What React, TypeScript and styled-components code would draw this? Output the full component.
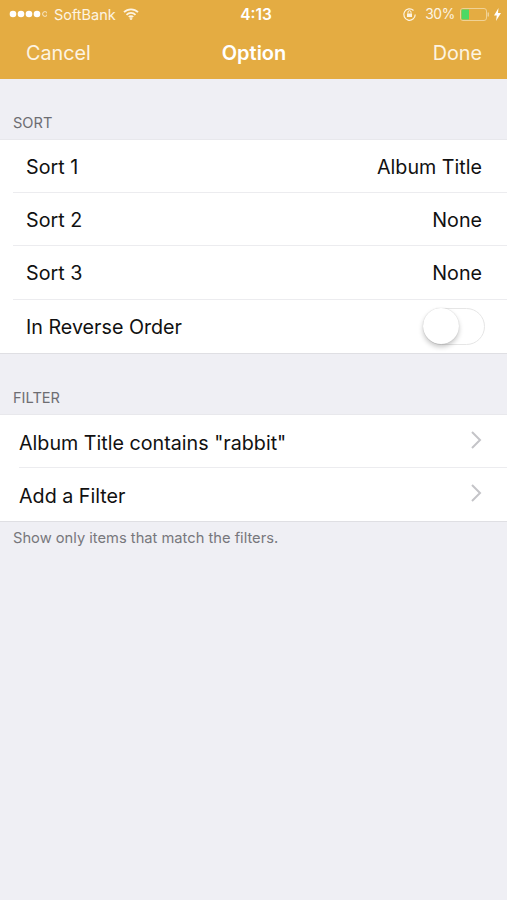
import React from "react";
import styled, { createGlobalStyle } from "styled-components";

const Global = createGlobalStyle`
  html, body { margin: 0; padding: 0; background: #efeff4; }
  body { font-family: Inter, "Liberation Sans", sans-serif; }
  * { box-sizing: border-box; }
`;

const Page = styled.div`
  width: 507px;
  height: 900px;
  overflow: hidden;
  background: #efeff4;
`;

const Header = styled.header`
  height: 79px;
  background: #e4ac42;
  color: #fdf4e2;
`;

const StatusBar = styled.div`
  height: 28px;
  padding: 0 9px;
  display: grid;
  grid-template-columns: 1fr auto 1fr;
  align-items: center;
  font-size: 14.5px;
`;

const StatusLeft = styled.div`
  display: flex;
  align-items: center;
  gap: 7px;
`;

const StatusRight = styled.div`
  display: flex;
  align-items: center;
  justify-content: flex-end;
  gap: 4px;
  margin-right: -3px;
`;

const Time = styled.div`
  margin-left: 5px;
  font-size: 15.5px;
  font-weight: 600;
  color: #fff;
`;

const Percent = styled.span`
  margin: 0 1px 0 4px;
  font-size: 13.8px;
  letter-spacing: -0.3px;
`;

const NavBar = styled.div`
  height: 51px;
  padding: 0 25px 2px 26px;
  display: grid;
  grid-template-columns: 1fr auto 1fr;
  align-items: center;
  font-size: 19.8px;
`;

const NavDone = styled.span`
  text-align: right;
`;

const NavTitle = styled.div`
  font-size: 20px;
  font-weight: 600;
  color: #fff;
`;

const SectionLabel = styled.div`
  height: 60px;
  padding: 0 13px 7px;
  display: flex;
  align-items: flex-end;
  font-size: 14.6px;
  color: #6d6d72;
`;

const Group = styled.section`
  background: #fff;
  border-top: 1px solid #e8e8ec;
  border-bottom: 1px solid #dfdfe3;
`;

const Row = styled.div<{ $flush?: boolean }>`
  height: ${(p) => (p.$flush ? 53 : 53.2)}px;
  margin-left: ${(p) => (p.$flush ? 19 : 13)}px;
  padding-left: ${(p) => (p.$flush ? 0 : 13)}px;
  padding-right: 25px;
  padding-top: ${(p) => (p.$flush ? 4 : 1)}px;
  display: flex;
  align-items: center;
  justify-content: space-between;
  font-size: 19.7px;
  color: #111;
  &:not(:last-child) {
    border-bottom: 1px solid #ececef;
  }
`;

const Toggle = styled.div`
  position: relative;
  width: 62px;
  height: 37px;
  margin-right: -3px;
  margin-bottom: 1px;
  border: 1.5px solid #e6e6e6;
  border-radius: 19px;
  background: #fff;
`;

const Knob = styled.div`
  position: absolute;
  left: -1px;
  top: -1px;
  width: 36px;
  height: 36px;
  border-radius: 50%;
  background: #fff;
  box-shadow: 0 3px 5px rgba(0, 0, 0, 0.22), 0 0 1px rgba(0, 0, 0, 0.2);
`;

const Footnote = styled.div`
  padding: 7px 13px;
  font-size: 14.7px;
  color: #77777c;
`;

const ChevronIcon = styled.svg`
  margin-bottom: 6px;
`;

const Chevron = () => (
  <ChevronIcon width="12" height="20" viewBox="0 0 12 20" fill="none">
    <path d="M2 2l8 8-8 8" stroke="#c4c4c8" strokeWidth="2" />
  </ChevronIcon>
);

const Wifi = () => (
  <svg width="16" height="12" viewBox="0 0 16 12" fill="none" stroke="#fdf4e2" strokeWidth="1.8">
    <path d="M1 4.2a10 10 0 0 1 14 0M3.5 6.8a6.4 6.4 0 0 1 9 0M5.8 9a3 3 0 0 1 4.4 0" />
    <circle cx="8" cy="10.6" r=".5" />
  </svg>
);

const Signal = () => (
  <svg width="38" height="8" viewBox="0 0 38 8">
    {[4, 12, 20, 28].map((x) => (
      <circle key={x} cx={x} cy="4" r="3.3" fill="#fff" />
    ))}
    <circle cx="36" cy="4" r="2.4" fill="none" stroke="#fff" strokeWidth=".7" />
  </svg>
);

const RotationLock = () => (
  <svg width="15" height="15" viewBox="0 0 15 15" fill="none" stroke="#fdf4e2" strokeWidth="1.2">
    <path d="M13.2 7.5a5.7 5.7 0 1 1-1.7-4" />
    <rect x="5" y="6.5" width="5" height="3.5" fill="#fdf4e2" stroke="none" />
    <path d="M6 6.5V5.2a1.5 1.5 0 0 1 3 0V6.5" strokeWidth="1" />
  </svg>
);

const Battery = () => (
  <svg width="30" height="13" viewBox="0 0 30 13" fill="none">
    <rect x=".5" y=".5" width="26" height="12" rx="2.5" stroke="#f0d295" />
    <rect x="1.5" y="1.5" width="7.5" height="10" fill="#4cd964" />
    <rect x="27.5" y="4.5" width="1.5" height="4" fill="#f0d295" />
  </svg>
);

const Bolt = () => (
  <svg width="7" height="13" viewBox="0 0 7 13">
    <path d="M4.5 0L0 7.4h2.8L2 13l5-8H4z" fill="#fff" />
  </svg>
);

export default function App() {
  return (
    <Page>
      <Global />
      <Header>
        <StatusBar>
          <StatusLeft>
            <Signal />
            <span>SoftBank</span>
            <Wifi />
          </StatusLeft>
          <Time>4:13</Time>
          <StatusRight>
            <RotationLock />
            <Percent>30%</Percent>
            <Battery />
            <Bolt />
          </StatusRight>
        </StatusBar>
        <NavBar>
          <span>Cancel</span>
          <NavTitle>Option</NavTitle>
          <NavDone>Done</NavDone>
        </NavBar>
      </Header>
      <SectionLabel>SORT</SectionLabel>
      <Group>
        <Row>
          <span>Sort 1</span>
          <span>Album Title</span>
        </Row>
        <Row>
          <span>Sort 2</span>
          <span>None</span>
        </Row>
        <Row>
          <span>Sort 3</span>
          <span>None</span>
        </Row>
        <Row>
          <span>In Reverse Order</span>
          <Toggle>
            <Knob />
          </Toggle>
        </Row>
      </Group>
      <SectionLabel>FILTER</SectionLabel>
      <Group>
        <Row $flush>
          <span>Album Title contains "rabbit"</span>
          <Chevron />
        </Row>
        <Row $flush>
          <span>Add a Filter</span>
          <Chevron />
        </Row>
      </Group>
      <Footnote>Show only items that match the filters.</Footnote>
    </Page>
  );
}
